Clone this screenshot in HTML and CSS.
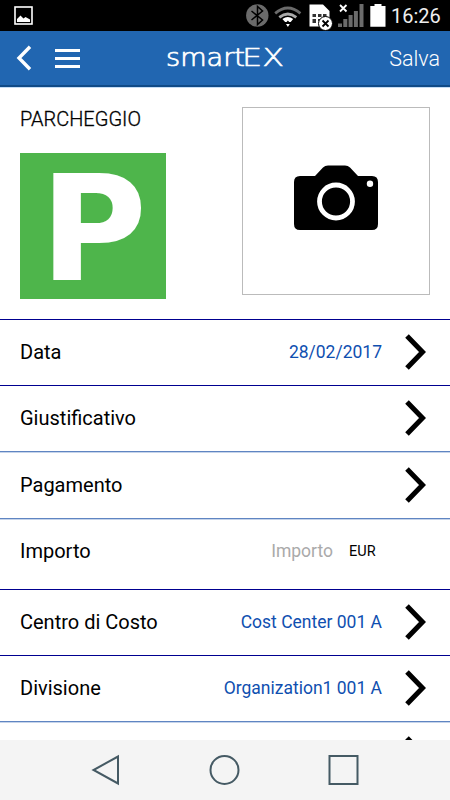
FILE: index.html
```html
<!DOCTYPE html>
<html lang="it">
<head>
    <meta charset="UTF-8">
    <meta name="viewport" content="width=device-width, initial-scale=1.0">
    <title>smartEX</title>
    <link rel="stylesheet" href="styles.css">
</head>
<body>

<div class="phone">
    <div class="status-bar">
        <svg width="19" height="19" viewBox="0 0 19 19">
            <rect x="1" y="1" width="17" height="17" fill="none" stroke="#fff" stroke-width="1.6"/>
            <path d="M3 16v-3l3.500-3.500 3 3 2-1.500 4.500 2.500V16z" fill="#fff"/>
        </svg>
        <!-- bluetooth, wifi, sim, signal, battery -->
        <svg class="status-icons" width="142" height="31" viewBox="244 0 142 31">
            <circle cx="257.3" cy="15.5" r="11.2" fill="#6b6b6b"/>
            <path d="M251.5 11l11 9-5 4.5V6.500l5 4.500-11 9" fill="none" stroke="#000" stroke-width="1.5"/>
            <g fill="none" stroke-width="2.8">
                <path d="M275.200 13.300q12.600-10.500 25.200 0" stroke="#6b6b6b"/>
                <path d="M279.300 17.300q8.500-6.600 17 0" stroke="#aaa"/>
            </g>
            <path d="M282.400 19q5.400-4 10.800 0l-2.500 3h-1.500l-1.300-1.500-1.300 1.500h-1.500zM286 24h3.800l-1.900 3z" fill="#fff"/>
            <path d="M309.500 4.500h13.500l6.500 6.500v15.500h-20z" fill="#fff"/>
            <path d="M312.500 14h3.500v3h-3.500zM318 14h3.500v3H318zM323 14h3.500v3H323zM312.500 19h3.500v4h-3.500zM318 19h3v2h-3z" fill="#333"/>
            <circle cx="325.500" cy="23.500" r="7" fill="#fff" stroke="#000"/>
            <path d="M322.500 20.500l6 6m0-6l-6 6" stroke="#000" stroke-width="1.8"/>
            <path d="M338 23.500h4v3.500h-4zM343.300 19h4v8h-4zM348.600 15h4v12h-4zM353.900 11h4v16h-4zM359.500 4h4v23h-4z" fill="#6b6b6b"/>
            <path d="M346.500 5l-6.500 6.500m0-6.500l6.500 6.500" stroke="#fff" stroke-width="1.8"/>
            <path d="M374.500 4h7v2h4v20.700h-15.200V6h4.200z" fill="#fff"/>
        </svg>
        <span class="clock">16:26</span>
    </div>

    <header class="header">
        <svg class="back" width="16" height="26" viewBox="0 0 16 26">
            <path d="M14 1.800L3 13l11 11.200" fill="none" stroke="#fff" stroke-width="3.400"/>
        </svg>
        <div class="menu"><i></i><i></i><i></i></div>
        <svg class="logo" width="122" height="36" viewBox="0 0 122 36">
            <text x="0" y="25.500" textLength="79" lengthAdjust="spacingAndGlyphs">smart</text>
            <text x="76" y="25.500" textLength="42" lengthAdjust="spacingAndGlyphs" class="logo-ex">EX</text>
        </svg>
        <span class="save">Salva</span>
    </header>

    <main class="content">
        <section class="expense">
            <div>
                <h1>PARCHEGGIO</h1>
                <div class="parking">P</div>
            </div>
            <div class="photo">
                <svg width="84" height="65" viewBox="0 0 84 65">
                    <path d="M6 11h15l8-8.500Q31 .5 34 .5h17q3 0 5 2l8 8.500h14q6 0 6 6v42q0 6-6 6H6q-6 0-6-6V17q0-6 6-6z"/>
                    <circle cx="42" cy="36.500" r="16.500" fill="none" stroke="#fff" stroke-width="4.800"/>
                    <circle cx="76" cy="18.800" r="3.200" fill="#fff"/>
                </svg>
            </div>
        </section>

        <div class="row dark">
            <span class="label">Data</span>
            <span class="value">28/02/2017</span>
            <svg class="arrow" viewBox="0 0 22 36"><path d="M2 2l15.500 16L2 34"/></svg>
        </div>
        <div class="row dark">
            <span class="label">Giustificativo</span>
            <svg class="arrow" viewBox="0 0 22 36"><path d="M2 2l15.500 16L2 34"/></svg>
        </div>
        <div class="row tall">
            <span class="label">Pagamento</span>
            <svg class="arrow" viewBox="0 0 22 36"><path d="M2 2l15.500 16L2 34"/></svg>
        </div>
        <div class="row amount">
            <span class="label">Importo</span>
            <span class="placeholder">Importo</span>
            <span class="currency">EUR</span>
        </div>
        <div class="row dark">
            <span class="label">Centro di Costo</span>
            <span class="value">Cost Center 001 A</span>
            <svg class="arrow" viewBox="0 0 22 36"><path d="M2 2l15.500 16L2 34"/></svg>
        </div>
        <div class="row dark">
            <span class="label">Divisione</span>
            <span class="value">Organization1 001 A</span>
            <svg class="arrow" viewBox="0 0 22 36"><path d="M2 2l15.500 16L2 34"/></svg>
        </div>
        <div class="row">
            <svg class="arrow" viewBox="0 0 22 36"><path d="M2 2l15.500 16L2 34"/></svg>
        </div>
    </main>

    <nav class="nav-bar">
        <svg width="32" height="32" viewBox="0 0 32 32"><path d="M28 2.500v27L3.500 16z"/></svg>
        <svg width="32" height="32" viewBox="0 0 32 32"><circle cx="15.500" cy="16" r="14"/></svg>
        <svg width="32" height="32" viewBox="0 0 32 32"><rect x="1.500" y="2" width="28" height="28"/></svg>
    </nav>
</div>

</body>
</html>
```

FILE: styles.css
```css
* {
    box-sizing: border-box;
}
body {
    font-family: Roboto, "Liberation Sans", sans-serif;
    margin: 0;
    background-color: #fff;
    color: #000;
}
.phone {
    width: 450px;
    height: 800px;
    display: flex;
    flex-direction: column;
    overflow: hidden;
}
svg {
    display: block;
    flex-shrink: 0;
}

/* Status bar */
.status-bar {
    height: 31px;
    flex-shrink: 0;
    display: flex;
    align-items: center;
    padding: 0 9px 0 14px;
    background-color: #000;
    color: #eee;
}
.status-icons {
    margin-left: auto;
}
.clock {
    width: 50px;
    margin-left: 5px;
    padding-top: 1px;
    font-size: 20px;
}

/* Header */
.header {
    height: 57px;
    flex-shrink: 0;
    display: flex;
    align-items: center;
    padding: 0 10px 2px 16px;
    background-color: #2166b1;
    border-bottom: 1px solid #c5dcf5;
    box-shadow: inset 0 -2px 0 #104a87;
    color: #fff;
}
.menu {
    display: grid;
    gap: 5px;
    width: 25px;
    margin-left: 23px;
    padding-top: 1px;
}
.menu i {
    height: 3px;
    background-color: #fff;
}
.logo {
    margin-left: 86px;
    overflow: visible;
    fill: #fff;
    stroke: #fff;
    stroke-width: 0.7;
    font-family: "DejaVu Sans", sans-serif;
    font-size: 24px;
    font-weight: 200;
}
.logo-ex {
    stroke-width: 0.5;
}
.save {
    margin-left: auto;
    font-size: 21.5px;
    font-weight: 300;
}

/* Form */
.content {
    height: 652px;
    overflow: hidden;
}
.expense {
    height: 231px;
    display: flex;
    justify-content: space-between;
    padding: 19px 20px 0;
}
.expense h1 {
    margin: 0;
    padding-top: 1px;
    font-size: 20px;
    line-height: 22px;
    font-weight: 300;
    -webkit-text-stroke: 0.3px #000;
}
.parking {
    width: 146px;
    height: 146px;
    margin-top: 23px;
    padding: 3px 0 0 20px;
    background-color: #4eb54b;
    color: #fff;
    font: bold 146px/146px "DejaVu Sans", sans-serif;
}
.photo {
    width: 188px;
    height: 188px;
    display: flex;
    align-items: center;
    justify-content: center;
    padding-bottom: 8px;
    border: 1px solid #bbb;
}
.row {
    height: 66px;
    display: flex;
    align-items: center;
    padding: 0 23px 1px 20px;
    border-top: 1px solid #5f85c2;
    box-shadow: inset 0 1px 0 #c6d4ea;
}
.row.dark {
    border-top-color: #000090;
    box-shadow: none;
}
.row.tall {
    height: 67px;
}
.row.amount {
    height: 71px;
    padding-bottom: 6px;
}
.label {
    margin-right: auto;
    font-size: 20px;
}
.value {
    padding-bottom: 1px;
    color: #0f4fb0;
    font-size: 17.5px;
}
.arrow {
    width: 22px;
    height: 36px;
    margin-left: 23px;
    fill: none;
    stroke: #000;
    stroke-width: 5;
}
.row .arrow:only-child {
    margin-left: auto;
}
.placeholder {
    color: #aaa;
    font-size: 17.5px;
}
.currency {
    width: 78px;
    margin-left: 16px;
    font-size: 14.5px;
}

/* Android buttons */
.nav-bar {
    height: 60px;
    flex-shrink: 0;
    display: flex;
    justify-content: center;
    align-items: center;
    gap: 87px;
    background-color: #f4f4f4;
}
.nav-bar svg {
    fill: none;
    stroke: #455a64;
    stroke-width: 2;
}
```
